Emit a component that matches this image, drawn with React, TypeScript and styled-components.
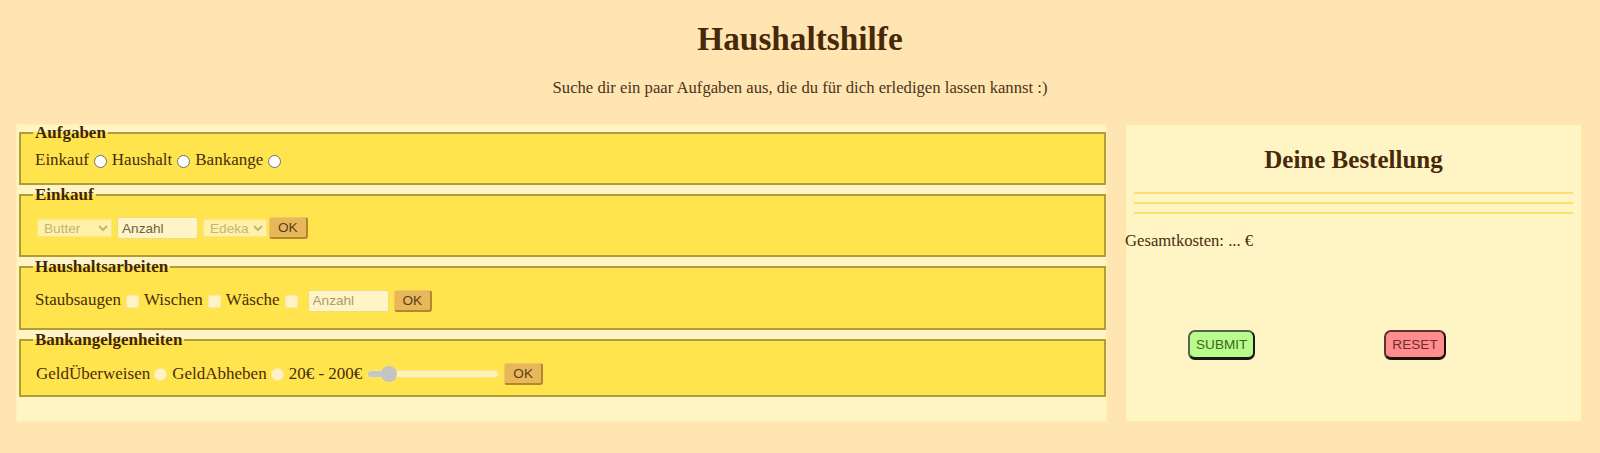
import React from "react";
import styled, { createGlobalStyle } from "styled-components";

const GlobalStyle = createGlobalStyle`
  html, body {
    margin: 0;
    padding: 0;
    background: #ffe5b2;
  }
  body {
    font-family: "Liberation Serif", "Times New Roman", serif;
    font-size: 16.67px;
    color: #4a2c0c;
  }
  * { box-sizing: border-box; }
`;

const Page = styled.div`
  width: 1600px;
  height: 453px;
  background: #ffe5b2;
  overflow: hidden;
`;

const Header = styled.header`
  display: flex;
  flex-direction: column;
  align-items: center;
  padding-top: 20px;
`;

const Title = styled.h1`
  margin: 0;
  font-size: 33.3px;
  line-height: 37px;
  font-weight: bold;
  color: #47290a;
`;

const Subtitle = styled.p`
  margin: 21.5px 0 0;
  font-size: 16.67px;
  line-height: 18.5px;
  color: #4d3416;
`;

const Main = styled.main`
  display: grid;
  grid-template-columns: 1091px 457px;
  column-gap: 18px;
  padding-left: 16px;
  margin-top: 27px;
  height: 298px;
`;

const FormPanel = styled.form`
  background: #fff5c4;
  box-shadow: inset 0 0 0 1px #fff0ae;
  padding-bottom: 24px;
  margin: 0;
`;

const Group = styled.fieldset<{ $pt: number; $pb: number }>`
  margin: 0 1px 1px 3px;
  padding: ${(p) => p.$pt}px 12px ${(p) => p.$pb}px;
  border: 2px solid #b19c3c;
  background: #ffe44e;
  min-width: 0;
`;

const Legend = styled.legend`
  padding: 0 2px;
  font-weight: bold;
  font-size: 17px;
  line-height: 18.5px;
  color: #3f2407;
`;

const Row = styled.div`
  display: flex;
  align-items: center;
  height: 22px;
  padding-left: 2px;
  white-space: nowrap;
`;

const Label = styled.span<{ $ml?: number }>`
  margin-left: ${(p) => p.$ml ?? 0}px;
  font-size: 17px;
  line-height: 18.5px;
`;

const Radio = styled.input.attrs({ type: "radio" })<{ $muted?: boolean }>`
  appearance: none;
  -webkit-appearance: none;
  width: 13px;
  height: 13px;
  margin: 1px 5px 0 ${(p) => (p.$muted ? 4 : 5)}px;
  border-radius: 50%;
  background: ${(p) => (p.$muted ? "#fff3c6" : "#ffffff")};
  border: 1px solid ${(p) => (p.$muted ? "#fbeaa6" : "#6f6f6f")};
  flex: none;
`;

const Check = styled.input.attrs({ type: "checkbox" })`
  appearance: none;
  -webkit-appearance: none;
  width: 13px;
  height: 13px;
  margin: 1px 5px 0 5px;
  border-radius: 2px;
  background: #fff3c6;
  border: 1px solid #fbeaa6;
  flex: none;
`;

const Select = styled.select<{ $w: number; $ml?: number }>`
  width: ${(p) => p.$w}px;
  height: 18px;
  margin-left: ${(p) => p.$ml ?? 0}px;
  padding: 0 0 0 2px;
  font-family: "Liberation Sans", Arial, sans-serif;
  font-size: 13.6px;
  color: #c6b47a;
  background-color: #fff1a8;
  border: 1px solid #f8e596;
  border-radius: 2px;
  flex: none;
`;

const CountInput = styled.input<{ $muted?: boolean; $ml?: number }>`
  width: 81px;
  height: 22px;
  margin-left: ${(p) => p.$ml ?? 0}px;
  padding: 1px 4px;
  font-family: "Liberation Sans", Arial, sans-serif;
  font-size: 13.6px;
  color: #5f5030;
  background: #fff4c6;
  border: 1px solid #f3da7c;
  border-radius: 2px;
  flex: none;
  &::placeholder {
    color: ${(p) => (p.$muted ? "#a99b74" : "#6f6142")};
  }
`;

const OkButton = styled.button<{ $ml?: number }>`
  height: 22px;
  margin-left: ${(p) => p.$ml ?? 0}px;
  padding: 0 8px;
  font-family: "Liberation Sans", Arial, sans-serif;
  font-size: 13.6px;
  color: #5b4020;
  background: #e8b75a;
  border-style: solid;
  border-width: 1px 2px 2px 1px;
  border-color: #efc46c #b4862c #b4862c #efc46c;
  border-radius: 3px;
  flex: none;
`;

const Range = styled.input.attrs({ type: "range" })<{ $fill: number }>`
  -webkit-appearance: none;
  appearance: none;
  width: 132px;
  height: 16px;
  margin: 0 0 0 5px;
  background: transparent;
  flex: none;
  &::-webkit-slider-runnable-track {
    height: 8px;
    border-radius: 4px;
    box-sizing: border-box;
    border: 1px solid #f3e497;
    background: linear-gradient(
      to right,
      #c6c6c2 0,
      #c6c6c2 ${(p) => p.$fill}%,
      #fff2b4 ${(p) => p.$fill}%,
      #fff2b4 100%
    );
  }
  &::-webkit-slider-thumb {
    -webkit-appearance: none;
    width: 16px;
    height: 16px;
    border-radius: 50%;
    background: #c4c4c2;
    margin-top: -5px;
    border: none;
  }
`;

const Summary = styled.aside`
  background: #fff5c4;
  box-shadow: inset 0 0 0 1px #ffea9c;
  display: flex;
  flex-direction: column;
`;

const SummaryTitle = styled.h2`
  margin: 21.5px 0 0;
  text-align: center;
  font-size: 25px;
  line-height: 27.7px;
  font-weight: bold;
  color: #47290a;
`;

const Rules = styled.div`
  display: flex;
  flex-direction: column;
  gap: 8px;
  margin: 18.3px 9px 0;
`;

const Rule = styled.div`
  height: 2px;
  background: #fbe06c;
`;

const Total = styled.p`
  margin: 18.75px 0 0;
  line-height: 18.5px;
  color: #4a2c0c;
`;

const Actions = styled.div`
  display: flex;
  gap: 129px;
  padding-left: 63px;
  margin-top: 79px;
`;

const ActionButton = styled.button<{ $variant: "submit" | "reset" }>`
  height: 30px;
  padding: 0 6px;
  font-family: "Liberation Sans", Arial, sans-serif;
  font-size: 13.6px;
  border-style: solid;
  border-width: 2px 2px 3px 2px;
  border-radius: 7px;
  color: ${(p) => (p.$variant === "submit" ? "#3d6522" : "#6d2e2e")};
  background: ${(p) => (p.$variant === "submit" ? "#b8fd8c" : "#ff8d8d")};
  border-color: ${(p) =>
    p.$variant === "submit"
      ? "#56624a #1a1a1a #1a1a1a #56624a"
      : "#5e3232 #1a1010 #1a1010 #5e3232"};
`;

export default function App() {
  return (
    <Page>
      <GlobalStyle />
      <Header>
        <Title>Haushaltshilfe</Title>
        <Subtitle>
          Suche dir ein paar Aufgaben aus, die du für dich erledigen lassen kannst :)
        </Subtitle>
      </Header>
      <Main>
        <FormPanel onSubmit={(e) => e.preventDefault()}>
          <Group $pt={7} $pb={11}>
            <Legend>Aufgaben</Legend>
            <Row>
              <Label>Einkauf</Label>
              <Radio name="task" />
              <Label>Haushalt</Label>
              <Radio name="task" />
              <Label>Bankange</Label>
              <Radio name="task" />
            </Row>
          </Group>
          <Group $pt={13} $pb={16}>
            <Legend>Einkauf</Legend>
            <Row>
              <Select $w={75} $ml={2} defaultValue="Butter">
                <option>Butter</option>
                <option>Milch</option>
                <option>Brot</option>
              </Select>
              <CountInput placeholder="Anzahl" $ml={5} />
              <Select $w={64} $ml={5} defaultValue="Edeka">
                <option>Edeka</option>
                <option>Rewe</option>
                <option>Aldi</option>
              </Select>
              <OkButton type="button" $ml={2}>OK</OkButton>
            </Row>
          </Group>
          <Group $pt={13} $pb={16}>
            <Legend>Haushaltsarbeiten</Legend>
            <Row>
              <Label>Staubsaugen</Label>
              <Check />
              <Label>Wischen</Label>
              <Check />
              <Label>Wäsche</Label>
              <Check />
              <CountInput placeholder="Anzahl" $muted $ml={5} />
              <OkButton type="button" $ml={5}>OK</OkButton>
            </Row>
          </Group>
          <Group $pt={14} $pb={10}>
            <Legend>Bankangelgenheiten</Legend>
            <Row>
              <Label $ml={1}>GeldÜberweisen</Label>
              <Radio name="bank" $muted />
              <Label>GeldAbheben</Label>
              <Radio name="bank" $muted />
              <Label>20€ - 200€</Label>
              <Range min={20} max={200} defaultValue={40} $fill={16} />
              <OkButton type="button" $ml={5}>OK</OkButton>
            </Row>
          </Group>
        </FormPanel>
        <Summary>
          <SummaryTitle>Deine Bestellung</SummaryTitle>
          <Rules>
            <Rule />
            <Rule />
            <Rule />
          </Rules>
          <Total>Gesamtkosten: ... €</Total>
          <Actions>
            <ActionButton type="button" $variant="submit">SUBMIT</ActionButton>
            <ActionButton type="button" $variant="reset">RESET</ActionButton>
          </Actions>
        </Summary>
      </Main>
    </Page>
  );
}
